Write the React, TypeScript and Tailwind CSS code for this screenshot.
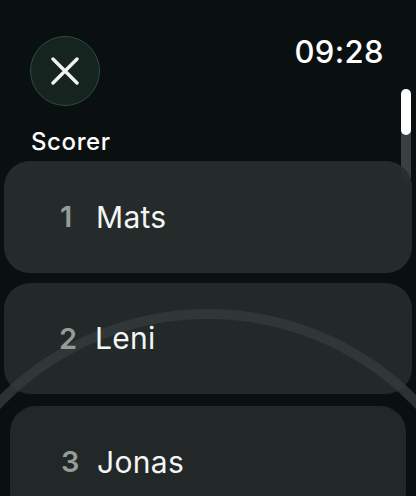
const scorers = [
  { rank: 1, name: "Mats" },
  { rank: 2, name: "Leni" },
  { rank: 3, name: "Jonas" },
];

export default function App() {
  return (
    <div
      className="relative w-[416px] h-[496px] overflow-hidden bg-[#0a100f] text-white"
      style={{ fontFamily: "Inter, 'Noto Sans', sans-serif" }}
    >
      {/* background arc */}
      <svg className="absolute left-0 top-0" width="416" height="496" viewBox="0 0 416 496">
        <circle cx="208" cy="604" r="290" fill="none" stroke="#2b3231" strokeWidth="10" />
      </svg>

      {/* scroll indicator */}
      <div className="absolute left-[401px] top-[89px] h-[93px] w-[10px] rounded-full bg-[#3a403f]">
        <div className="h-[46px] w-full rounded-full bg-white" />
      </div>

      <div className="relative flex items-start justify-between pl-[30px] pr-[32px] pt-[36px]">
        <button className="flex h-[70px] w-[70px] items-center justify-center rounded-full border-[1.5px] border-[#2f4b43] bg-[#16241f]">
          <svg width="28" height="28" viewBox="0 0 28 28">
            <path d="M2 2 L26 26 M26 2 L2 26" stroke="#f2f2f2" strokeWidth="3.4" strokeLinecap="round" fill="none" />
          </svg>
        </button>
        <span className="text-[31px] font-medium leading-none tracking-[0.4px]">09:28</span>
      </div>

      <div className="relative mt-[24px] pl-[31px] text-[24px] font-medium leading-none tracking-[0.6px]">
        Scorer
      </div>

      <div className="relative mt-[7px] flex flex-col gap-[10px] px-[4px]">
        {scorers.map((s, i) => (
          <div
            key={s.rank}
            className={
              i === 0
                ? "flex h-[112px] items-center rounded-[26px] bg-[#262d2c]/95 pl-[56px]"
                : i === 1
                ? "flex h-[111px] items-center rounded-[26px] bg-[#343a3b]/60 pl-[55px]"
                : "mx-[6px] mt-[2px] flex h-[112px] items-center rounded-[26px] bg-[#222728] pl-[51px]"
            }
          >
            <span className="w-[36px] text-[29px] font-semibold text-[#959c9a]">{s.rank}</span>
            <span className="text-[30px] font-normal tracking-[0.3px] text-[#f4f5f5]">{s.name}</span>
          </div>
        ))}
      </div>
    </div>
  );
}
